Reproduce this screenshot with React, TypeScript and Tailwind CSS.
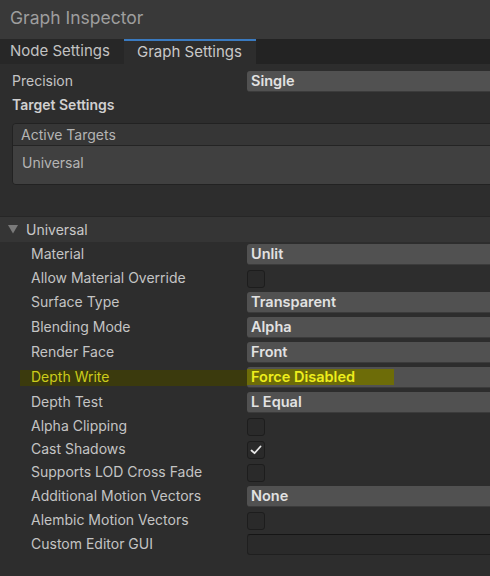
import React from "react";

type Row =
  | { label: string; kind: "drop"; value: string; hl?: boolean }
  | { label: string; kind: "check"; checked?: boolean }
  | { label: string; kind: "text" };

const rows: Row[] = [
  { label: "Material", kind: "drop", value: "Unlit" },
  { label: "Allow Material Override", kind: "check" },
  { label: "Surface Type", kind: "drop", value: "Transparent" },
  { label: "Blending Mode", kind: "drop", value: "Alpha" },
  { label: "Render Face", kind: "drop", value: "Front" },
  { label: "Depth Write", kind: "drop", value: "Force Disabled", hl: true },
  { label: "Depth Test", kind: "drop", value: "L Equal" },
  { label: "Alpha Clipping", kind: "check" },
  { label: "Cast Shadows", kind: "check", checked: true },
  { label: "Supports LOD Cross Fade", kind: "check" },
  { label: "Additional Motion Vectors", kind: "drop", value: "None" },
  { label: "Alembic Motion Vectors", kind: "check" },
  { label: "Custom Editor GUI", kind: "text" },
];

function Dropdown({ value, hl }: { value: string; hl?: boolean }) {
  return (
    <div className="flex-1 h-[21px] bg-[#515151] rounded-[3px] border-b border-[#3b3b3b] flex items-center text-[14.5px] font-semibold text-[#e2e2e2]">
      {hl ? (
        <span className="h-[16px] w-[147px] bg-[#6d6c08] text-[#eeee1c] pl-[4px] flex items-center">
          {value}
        </span>
      ) : (
        <span className="pl-[4px]">{value}</span>
      )}
    </div>
  );
}

function Check({ checked }: { checked?: boolean }) {
  return (
    <div className="w-[18px] h-[18px] rounded-[3px] bg-[#2a2a2a] border border-[#1d1d1d] flex items-center justify-center">
      {checked && (
        <svg width="12" height="10" viewBox="0 0 12 10">
          <polyline points="1.5,5.5 4.5,8.2 10.5,1.5" fill="none" stroke="#e8e8e8" strokeWidth="1.8" strokeLinecap="round" strokeLinejoin="round" />
        </svg>
      )}
    </div>
  );
}

export default function App() {
  return (
    <div className="w-[490px] h-[576px] overflow-hidden bg-[#2d2d2d] font-['Inter',sans-serif]">
      <div className="w-[500px]">
        <div className="h-[39px] bg-[#393939] pl-[10px] flex items-center text-[17.5px] text-[#9e9e9e] pb-[2px]">
          Graph Inspector
        </div>
        <div className="h-[25px] bg-[#232323] flex text-[15px]">
          <div className="w-[124px] bg-[#272727] pl-[10px] flex items-center text-[#c2c2c2]">
            Node Settings
          </div>
          <div className="w-[132px] bg-[#2d2d2d] border-t-2 border-[#3a7ac0] pl-[13px] flex items-center text-[#c9c9c9]">
            Graph Settings
          </div>
        </div>

        <div className="mt-[7px] h-[21px] flex items-center">
          <div className="w-[247px] pl-[12px] pb-[3px] text-[14px] text-[#c4c4c4]">Precision</div>
          <Dropdown value="Single" />
        </div>
        <div className="mt-[2px] h-[20px] pl-[12px] flex items-center text-[14px] font-semibold text-[#d0d0d0]">
          Target Settings
        </div>

        <div className="mt-[9px] ml-[12px] border border-[#222222] rounded-[4px] overflow-hidden">
          <div className="h-[22px] bg-[#363636] border-b border-[#242424] pl-[8px] flex items-center text-[14px] text-[#b4b4b4]">
            Active Targets
          </div>
          <div className="h-[38px] bg-[#404040] pl-[9px] pt-[6px] text-[14px] text-[#b4b4b4]">
            Universal
          </div>
        </div>

        <div className="mt-[31px] h-[26px] bg-[#353535] border-t border-[#262626] flex items-center">
          <svg className="ml-[8px]" width="10" height="9" viewBox="0 0 10 9">
            <polygon points="0,0 10,0 5,8.5" fill="#7a7a7a" />
          </svg>
          <span className="ml-[8px] text-[14px] text-[#c8c8c8]">Universal</span>
        </div>

        <div className="pt-[2px] flex flex-col gap-[4px]">
          {rows.map((r) => (
            <div
              key={r.label}
              className={r.kind === "check" ? "h-[19px] flex items-center" : "h-[21px] flex items-center"}
            >
              <div className="w-[247px] pl-[20px] flex items-center">
                <span
                  className={
                    r.kind === "drop" && r.hl
                      ? "flex-1 h-[16px] pl-[11px] pb-[2px] flex items-center bg-[#3b3a0d] text-[14px] text-[#cccc1a]"
                      : "pl-[11px] pb-[3px] text-[14px] text-[#c4c4c4]"
                  }
                >
                  {r.label}
                </span>
              </div>
              {r.kind === "drop" && <Dropdown value={r.value} hl={r.hl} />}
              {r.kind === "check" && <Check checked={r.checked} />}
              {r.kind === "text" && (
                <div className="flex-1 h-[21px] bg-[#2a2a2a] border border-[#1f1f1f] border-t-[#151515] rounded-[3px]" />
              )}
            </div>
          ))}
        </div>
      </div>
    </div>
  );
}
